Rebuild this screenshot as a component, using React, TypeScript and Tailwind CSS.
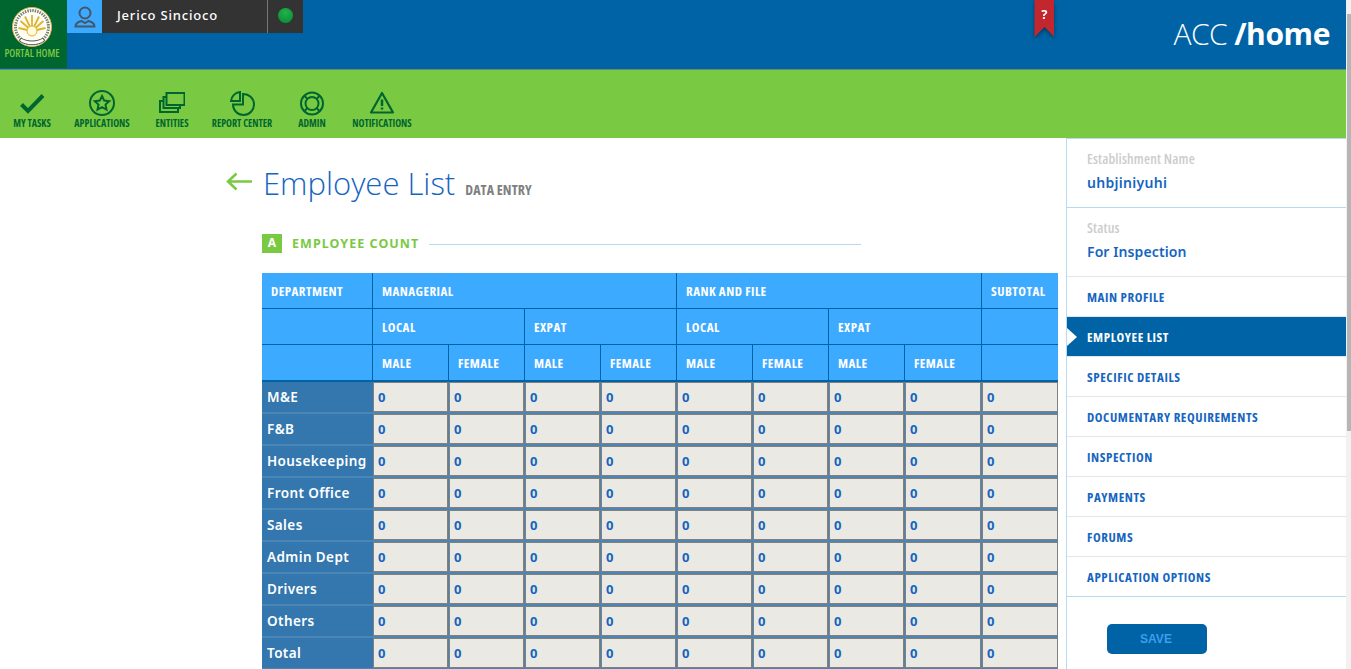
import React from "react";

const nav: [string, React.ReactNode][] = [
  ["MY TASKS", <path d="M2.500 14.500l6.500 6.500L24 5.500" strokeWidth="4" fill="none" />],
  [
    "APPLICATIONS",
    <>
      <circle cx="13" cy="13" r="12" strokeWidth="2" fill="none" />
      <path d="M13 6l2.200 4.600 5 .6-3.700 3.400 1 5-4.500-2.500L8.500 19.600l1-5L5.800 11.200l5-.6z" strokeWidth="2" fill="none" />
    </>,
  ],
  [
    "ENTITIES",
    <>
      <rect x="7.500" y="3" width="18" height="12" strokeWidth="2" fill="none" />
      <path d="M7 7H4.500v11H21v-2.500M4 11H1v11h18v-3.500" strokeWidth="2" fill="none" />
    </>,
  ],
  [
    "REPORT CENTER",
    <>
      <path d="M11 2A10 10 0 0 0 2 11H11z" strokeWidth="2" fill="none" />
      <path d="M14 4A10.500 10.500 0 1 1 4 14.500H14z" strokeWidth="2" fill="none" />
    </>,
  ],
  [
    "ADMIN",
    <>
      <circle cx="13" cy="13.500" r="11" strokeWidth="2" fill="none" />
      <circle cx="13" cy="13.500" r="6.500" strokeWidth="2" fill="none" />
      <path d="M5.500 6l3 3M20.500 6l-3 3M5.500 21l3-3M20.500 21l-3-3" strokeWidth="2" />
    </>,
  ],
  [
    "NOTIFICATIONS",
    <>
      <path d="M13 3L2 22.500h22z" strokeWidth="2.200" fill="none" strokeLinejoin="round" />
      <path d="M13 9.500v6.500M13 17.500v2" strokeWidth="2.500" />
    </>,
  ],
];

const sideLinks = [
  "MAIN PROFILE",
  "EMPLOYEE LIST",
  "SPECIFIC DETAILS",
  "DOCUMENTARY REQUIREMENTS",
  "INSPECTION",
  "PAYMENTS",
  "FORUMS",
  "APPLICATION OPTIONS",
];

const rows = ["M&E", "F&B", "Housekeeping", "Front Office", "Sales", "Admin Dept", "Drivers", "Others", "Total"];

const cond = "[font-family:'Open_Sans',sans-serif] [font-stretch:75%]";
const th = `border-b border-r border-[#0063a5] px-[9px] pt-[2px] text-left align-middle font-bold text-white text-[13px] tracking-[0.45px] h-[36px] ${cond}`;
const thLast = "h-[37px] border-b-2";

function Seal() {
  return (
    <svg width="40" height="40" viewBox="0 0 40 40" className="mt-[7px]">
      <circle cx="20" cy="20" r="19.500" fill="#fff" stroke="#d9b54a" strokeWidth="1" />
      <circle cx="20" cy="20" r="16.500" fill="none" stroke="#7d8470" strokeWidth="3" strokeDasharray="1.500 1" />
      <circle cx="20" cy="20" r="14" fill="#fffdf2" />
      <g stroke="#e0b22e" strokeWidth="1.800">
        <path d="M20 24L20 8M20 24L13 9.500M20 24L27 9.500M20 24L8.500 14M20 24L31.500 14M20 24L6.500 21M20 24L33.500 21" />
      </g>
      <circle cx="20" cy="24" r="5" fill="#fffbe0" stroke="#e0b22e" />
      <path d="M9 31c6 4 16 4 22 0l1.500 3c-7 5-18 5-25 0z" fill="#fff" stroke="#555" strokeWidth="1" />
    </svg>
  );
}

export default function App() {
  return (
    <div className="relative h-[669px] w-[1351px] overflow-hidden bg-white [font-family:'Noto_Sans','Open_Sans',sans-serif]">
      <div className="w-[1346px]">
        <header className="flex h-[69px] justify-between bg-[#0063a5]">
          <div className="flex items-start">
            <div className="flex h-[68px] w-[67px] flex-col items-center bg-[#00662f] pr-[3px]">
              <Seal />
              <span className={`whitespace-nowrap text-[10.500px] font-semibold leading-[12px] text-[#7ac943] ${cond}`}>PORTAL HOME</span>
            </div>
            <div className="flex h-[33px] w-[35px] items-center justify-center bg-[#3caaff]">
              <svg width="22" height="22" viewBox="0 0 22 22" fill="none" stroke="#44576b" strokeWidth="2">
                <circle cx="11" cy="7" r="5.500" />
                <path d="M1.500 20.500c0-3.500 4-5 6-5.500l3.500 2 3.500-2c2 .5 6 2 6 5.500z" />
              </svg>
            </div>
            <div className="flex h-[33px] w-[166px] items-center border-r border-[#777] bg-[#333] pb-[2px] pl-[15px] text-[13px] font-medium tracking-[0.8px] text-white">
              Jerico Sincioco
            </div>
            <div className="flex h-[33px] w-[35px] items-center justify-center bg-[#333] pb-[2px]">
              <span className="block h-[15px] w-[15px] rounded-full bg-[radial-gradient(circle_at_50%_30%,#22b14c,#078a33)]" />
            </div>
          </div>
          <div className="flex items-start">
            <div className="mr-[119px] drop-shadow-[0_2px_2px_rgba(0,0,0,0.4)]">
              <div className="flex h-[37px] w-[20px] justify-center bg-[#c1272d] pt-[7px] text-[13px] font-bold leading-[14px] text-white [clip-path:polygon(0_0,100%_0,100%_100%,50%_73%,0_100%)]">
                ?
              </div>
            </div>
            <div className="mr-[16px] mt-[17px] text-[30px] leading-[34px] text-white [font-family:'Open_Sans',sans-serif]">
              <span className="font-light tracking-[-0.6px]">ACC </span>
              <span className="font-bold tracking-[-0.4px]">/home</span>
            </div>
          </div>
        </header>
        <nav className="flex h-[69px] border-t border-[#5f8f6a] bg-[#7ac943] pt-[20px]">
          <div className="-ml-[3px] flex">
            {nav.map(([label, icon]) => (
              <div key={label as string} className="flex w-[70px] flex-col items-center">
                <svg width="26" height="26" viewBox="0 0 26 26" stroke="#00662f" fill="none">
                  {icon}
                </svg>
                <span className={`mt-[1px] whitespace-nowrap text-[10px] font-bold leading-[12px] text-[#00662f] ${cond}`}>{label}</span>
              </div>
            ))}
          </div>
        </nav>
        <div className="flex">
          <main className="w-[1066px] pl-[226px]">
            <div className="mt-[27px] flex h-[36px] items-center">
              <svg width="26" height="20" viewBox="0 0 26 20" fill="none" stroke="#7ac943" strokeWidth="2.500" className="mb-[2px] mr-[11px]">
                <path d="M26 9.500H2M10.500 1.500L2 9.500l8.500 8" />
              </svg>
              <h1 className="text-[31px] font-light leading-[36px] text-[#1565c0] [font-family:'Open_Sans',sans-serif]">Employee List</h1>
              <span className={`ml-[10px] mt-[12px] text-[14px] font-bold tracking-[0.1px] text-[#808080] ${cond}`}>DATA ENTRY</span>
            </div>
            <div className="ml-[36px] mt-[32px] flex h-[20px] w-[599px] items-center">
              <span className="flex h-[19px] w-[20px] items-center justify-center bg-[#7ac943] text-[12px] font-bold text-white">A</span>
              <span className="ml-[10px] mt-[2px] text-[12.500px] font-bold tracking-[1.05px] text-[#7ac943]">EMPLOYEE COUNT</span>
              <span className="ml-[10px] mt-[2px] h-px flex-1 bg-[#b9d9ee]" />
            </div>
            <table className="ml-[36px] mt-[20px] w-[796px] table-fixed border-separate border-spacing-0">
              <colgroup>
                <col className="w-[111px]" />
                {Array.from({ length: 7 }).map((_, i) => (
                  <col key={i} className="w-[76px]" />
                ))}
                <col className="w-[77px]" />
                <col className="w-[76px]" />
              </colgroup>
              <thead className="bg-[#3caaff]">
                <tr>
                  <th className={th}>DEPARTMENT</th>
                  <th colSpan={4} className={th}>MANAGERIAL</th>
                  <th colSpan={4} className={th}>RANK AND FILE</th>
                  <th className={`${th} border-r-0`}>SUBTOTAL</th>
                </tr>
                <tr>
                  <th className={th} />
                  <th colSpan={2} className={th}>LOCAL</th>
                  <th colSpan={2} className={th}>EXPAT</th>
                  <th colSpan={2} className={th}>LOCAL</th>
                  <th colSpan={2} className={th}>EXPAT</th>
                  <th className={`${th} border-r-0`} />
                </tr>
                <tr>
                  <th className={`${th} ${thLast}`} />
                  {["MALE", "FEMALE", "MALE", "FEMALE", "MALE", "FEMALE", "MALE", "FEMALE"].map((l, i) => (
                    <th key={i} className={`${th} ${thLast}`}>{l}</th>
                  ))}
                  <th className={`${th} ${thLast} border-r-0`} />
                </tr>
              </thead>
              <tbody>
                {rows.map((r) => (
                  <tr key={r} className="h-[32px]">
                    <td className="border-b-2 border-[#4a86b6] bg-[#3377ae] px-[5px] pt-[2px] text-[13.500px] font-semibold leading-none tracking-[0.4px] text-white whitespace-nowrap">{r}</td>
                    {Array.from({ length: 9 }).map((_, i) => (
                      <td key={i} className="border-b-2 border-r border-[#4f84b0] p-0 last:border-r-0">
                        <div className="flex h-[30px] items-center border border-[#808080] bg-[#ebe9e3] pl-[4px] pt-[2px] text-[13px] font-bold text-[#1565c0]">0</div>
                      </td>
                    ))}
                  </tr>
                ))}
              </tbody>
            </table>
          </main>
          <aside className="w-[280px] border-l border-t border-[#b9d9ee]">
            <div className="h-[69px] border-b border-[#b9d9ee] px-[20px] pt-[12px]">
              <div className={`text-[14px] font-semibold leading-[16px] tracking-[0.15px] text-[#cccccc] ${cond}`}>Establishment Name</div>
              <div className="mt-[7px] text-[14px] font-semibold leading-[18px] tracking-[0.3px] text-[#1565c0]">uhbjiniyuhi</div>
            </div>
            <div className="h-[69px] border-b border-[#e0e6ea] px-[20px] pt-[12px]">
              <div className={`text-[14px] font-semibold leading-[16px] tracking-[0.15px] text-[#cccccc] ${cond}`}>Status</div>
              <div className="mt-[7px] text-[14px] font-semibold leading-[18px] tracking-[0.1px] text-[#1565c0]">For Inspection</div>
            </div>
            {sideLinks.map((l, i) => (
              <div
                key={l}
                className={`relative flex h-[40px] items-center border-b pl-[20px] pt-[2px] text-[13px] font-bold tracking-[0.57px] ${cond} ${
                  i === 7 ? "border-[#b9d9ee]" : "border-[#e0e6ea]"
                } ${l === "EMPLOYEE LIST" ? "bg-[#0063a5] text-white" : "text-[#1565c0]"}`}
              >
                {l === "EMPLOYEE LIST" && (
                  <span className="absolute left-0 top-[11px] h-0 w-0 border-y-[9px] border-l-[10px] border-y-transparent border-l-white" />
                )}
                {l}
              </div>
            ))}
            <button className="ml-[40px] mt-[27px] h-[30px] w-[100px] rounded-[5px] bg-[#0063a5] pr-[2px] text-[12px] font-bold text-[#3c9eee] [font-family:'Liberation_Sans',sans-serif]">
              SAVE
            </button>
          </aside>
        </div>
      </div>
      <div className="absolute bottom-0 right-0 top-0 w-[5px] bg-[#f1f1f1]">
        <div className="ml-[1px] mt-[14px] h-[417px] w-[4px] bg-[#b5b5b5]" />
      </div>
    </div>
  );
}
